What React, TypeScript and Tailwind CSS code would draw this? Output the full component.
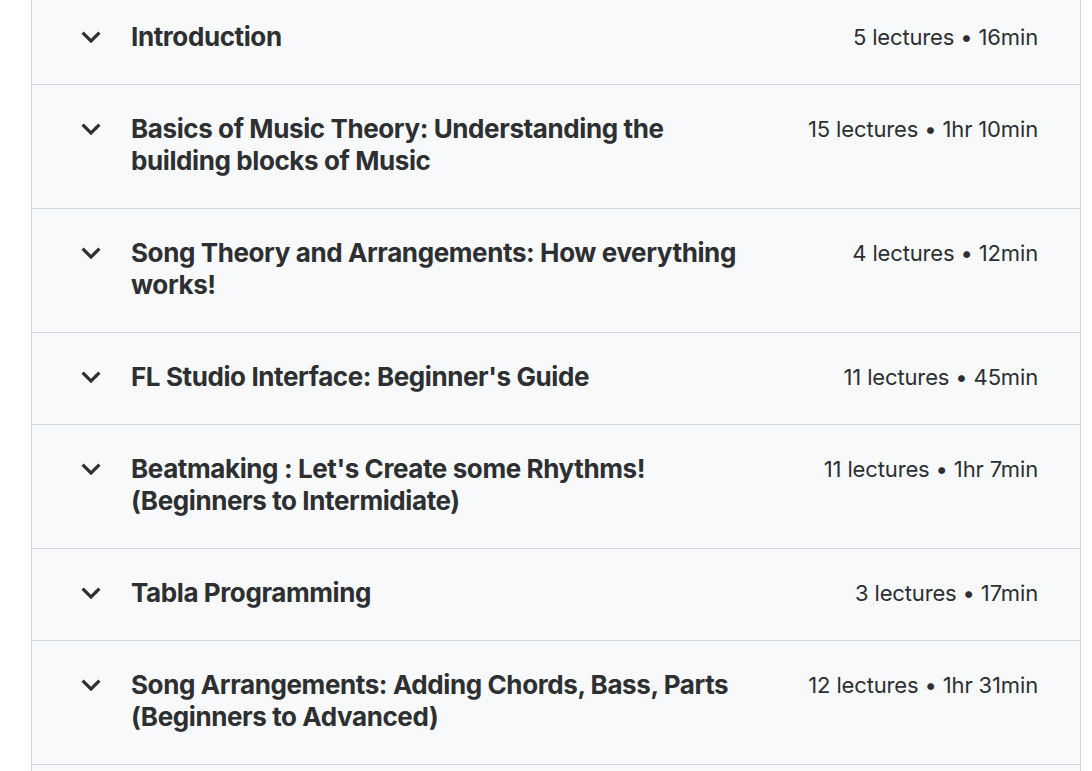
const sections = [
  { title: ['Introduction'], meta: '5 lectures • 16min' },
  { title: ['Basics of Music Theory: Understanding the', 'building blocks of Music'], meta: '15 lectures • 1hr 10min' },
  { title: ['Song Theory and Arrangements: How everything', 'works!'], meta: '4 lectures • 12min' },
  { title: ["FL Studio Interface: Beginner's Guide"], meta: '11 lectures • 45min' },
  { title: ["Beatmaking : Let's Create some Rhythms!", '(Beginners to Intermidiate)'], meta: '11 lectures • 1hr 7min' },
  { title: ['Tabla Programming'], meta: '3 lectures • 17min' },
  { title: ['Song Arrangements: Adding Chords, Bass, Parts', '(Beginners to Advanced)'], meta: '12 lectures • 1hr 31min' },
]

const Chevron = () => (
  <div className="h-[32px] w-[38px] flex items-center justify-center shrink-0">
    <svg width="38" height="38" viewBox="0 0 24 24" fill="currentColor" className="shrink-0">
      <path d="M16.59 8.59 12 13.17 7.41 8.59 6 10l6 6 6-6z" />
    </svg>
  </div>
)

const App = () => {
  return (
    <div className="w-[1092px] h-[771px] overflow-hidden bg-white" style={{ fontFamily: 'Inter, "Noto Sans", sans-serif' }}>
      <div className="ml-[31px] w-[1050px] -mt-[7px] pb-[40px] border-x border-[#d1d7dc] bg-[#f7f9fa] text-[#2d2f31]">
        {sections.map((s, i) => (
          <div key={i} className="flex items-start pl-[40px] pr-[42px] pt-[28px] pb-[31px] border-b border-[#d1d7dc]">
            <Chevron />
            <div className="ml-[21px] flex-1 text-[26px] leading-[32px] font-bold tracking-[-0.4px]">
              {s.title.map((line, j) => (
                <div key={j} className="whitespace-nowrap">{line}</div>
              ))}
            </div>
            <div className="ml-8 whitespace-nowrap text-right text-[22px] leading-[32px] tracking-[-0.15px]">
              {s.meta}
            </div>
          </div>
        ))}
      </div>
    </div>
  )
}

export default App
